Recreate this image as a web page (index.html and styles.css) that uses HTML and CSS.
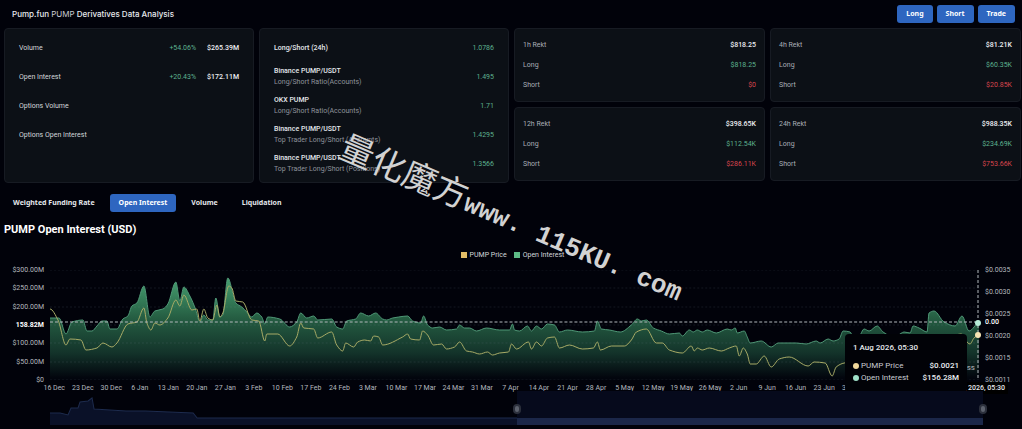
FILE: index.html
```
<!DOCTYPE html>
<html lang="en">
<head>
  <meta charset="UTF-8" />
  <meta name="viewport" content="width=device-width, initial-scale=1.0"/>
  <title>PUMP Derivatives Data Analysis</title>
  <link rel="stylesheet" href="styles.css">
</head>
<body>

  <!-- Header -->
  <header class="header">
    <h1>Pump.fun <span>PUMP</span> Derivatives Data Analysis</h1>
    <div class="actions">
      <button class="btn">Long</button>
      <button class="btn">Short</button>
      <button class="btn">Trade</button>
    </div>
  </header>

  <!-- Stat cards -->
  <section class="cards">
    <div class="card tall">
      <div class="row"><span>Volume</span><span class="up">+54.06%</span><b>$265.39M</b></div>
      <div class="row"><span>Open Interest</span><span class="up">+20.43%</span><b>$172.11M</b></div>
      <div class="row"><span>Options Volume</span></div>
      <div class="row"><span>Options Open Interest</span></div>
    </div>

    <div class="card tall">
      <div class="row"><strong>Long/Short (24h)</strong><span class="up">1.0786</span></div>
      <div class="row"><div><strong>Binance PUMP/USDT</strong><small>Long/Short Ratio(Accounts)</small></div><span class="up">1.495</span></div>
      <div class="row"><div><strong>OKX PUMP</strong><small>Long/Short Ratio(Accounts)</small></div><span class="up">1.71</span></div>
      <div class="row"><div><strong>Binance PUMP/USDT</strong><small>Top Trader Long/Short (Accounts)</small></div><span class="up">1.4295</span></div>
      <div class="row"><div><strong>Binance PUMP/USDT</strong><small>Top Trader Long/Short (Positions)</small></div><span class="up">1.3566</span></div>
    </div>

    <div class="rekt">
      <div class="card small">
        <div class="line"><span>1h Rekt</span><b>$818.25</b></div>
        <div class="line"><span>Long</span><span class="up">$818.25</span></div>
        <div class="line"><span>Short</span><span class="down">$0</span></div>
      </div>
      <div class="card small">
        <div class="line"><span>4h Rekt</span><b>$81.21K</b></div>
        <div class="line"><span>Long</span><span class="up">$60.35K</span></div>
        <div class="line"><span>Short</span><span class="down">$20.85K</span></div>
      </div>
      <div class="card small">
        <div class="line"><span>12h Rekt</span><b>$398.65K</b></div>
        <div class="line"><span>Long</span><span class="up">$112.54K</span></div>
        <div class="line"><span>Short</span><span class="down">$286.11K</span></div>
      </div>
      <div class="card small">
        <div class="line"><span>24h Rekt</span><b>$988.35K</b></div>
        <div class="line"><span>Long</span><span class="up">$234.69K</span></div>
        <div class="line"><span>Short</span><span class="down">$753.66K</span></div>
      </div>
    </div>
  </section>

  <!-- Tabs -->
  <nav class="tabs">
    <button class="tab">Weighted Funding Rate</button>
    <button class="tab active">Open Interest</button>
    <button class="tab">Volume</button>
    <button class="tab">Liquidation</button>
  </nav>

  <h2>PUMP Open Interest (USD)</h2>

  <!-- Chart -->
  <div class="legend">
    <span><i class="box yellow"></i>PUMP Price</span>
    <span><i class="box green"></i>Open Interest</span>
  </div>

  <section class="chart">
    <div class="axis left">
      <span>$300.00M</span><span>$250.00M</span><span>$200.00M</span><span class="mark">158.82M</span><span>$100.00M</span><span>$50.00M</span><span>$0</span>
    </div>

    <div class="plot">
      <svg viewBox="0 0 930 110" preserveAspectRatio="none">
        <defs>
          <linearGradient id="fill" gradientUnits="userSpaceOnUse" x1="0" y1="8" x2="0" y2="108">
            <stop offset="0" stop-color="#46a070"/>
            <stop offset="0.4" stop-color="#255d42"/>
            <stop offset="0.75" stop-color="#13332a"/>
            <stop offset="1" stop-color="#02050d"/>
          </linearGradient>
        </defs>
        <path id="area" fill="url(#fill)"/>
        <path class="grid" d="M0 0H930M0 18H930M0 37H930M0 55H930M0 73H930M0 92H930M0 110H930"/>
        <path id="oi" class="oi-line"/>
        <path id="price" class="price-line"/>
        <path class="cross" d="M0 52H930M929 0V110"/>
      </svg>
      <span class="brand">ss</span>
      <i class="dot oi-dot"></i>
      <i class="dot price-dot"></i>
      <span class="zero">0.00</span>
      <span class="date-tag">1 Aug 2026, 05:30</span>
      <div class="tooltip">
        <p>1 Aug 2026, 05:30</p>
        <div><i class="bullet cream"></i><span>PUMP Price</span><b>$0.0021</b></div>
        <div><i class="bullet mint"></i><span>Open Interest</span><b>$156.28M</b></div>
      </div>
    </div>

    <div class="axis right">
      <span>$0.0035</span><span>$0.0030</span><span>$0.0025</span><span>$0.0020</span><span>$0.0015</span><span>$0.0011</span>
    </div>
  </section>

  <div class="dates">
    <span>16 Dec</span><span>23 Dec</span><span>30 Dec</span><span>6 Jan</span><span>13 Jan</span><span>20 Jan</span><span>27 Jan</span>
    <span>3 Feb</span><span>10 Feb</span><span>17 Feb</span><span>24 Feb</span><span>3 Mar</span><span>10 Mar</span><span>17 Mar</span>
    <span>24 Mar</span><span>31 Mar</span><span>7 Apr</span><span>14 Apr</span><span>21 Apr</span><span>28 Apr</span><span>5 May</span>
    <span>12 May</span><span>19 May</span><span>26 May</span><span>2 Jun</span><span>9 Jun</span><span>16 Jun</span><span>23 Jun</span><span>30 Jun</span>
  </div>

  <!-- Range slider -->
  <div class="brush">
    <svg viewBox="0 0 932 34" preserveAspectRatio="none">
      <path class="brush-area" d="M0 22L10 22L18 24L21 17L28 17L30 11L38 10L42 7L44 18L76 20L95 20L143 22L147 27H932V34H0Z"/>
      <path class="brush-line" d="M0 22L10 22L18 24L21 17L28 17L30 11L38 10L42 7L44 18L76 20L95 20L143 22L147 27H932"/>
    </svg>
    <div class="selection">
      <i class="handle start"></i>
      <i class="handle end"></i>
    </div>
  </div>

  <div class="watermark"><span>量化魔方</span>www. 115KU. com</div>

  <script src="script.js"></script>
</body>
</html>
```
FILE: styles.css
```
/* Reset */
* {
  margin: 0;
  padding: 0;
  box-sizing: border-box;
}

body {
  font-family: Roboto, "Noto Sans", sans-serif;
  font-size: 7px;
  line-height: 10px;
  background-color: #01020a;
  color: #d3d6da;
  padding: 0 1px 0 4px;
  overflow: hidden;
}

button {
  font-family: "Noto Sans", sans-serif;
  font-size: 7px;
  line-height: 10px;
  font-weight: bold;
  color: #e4e7ec;
  border: none;
  border-radius: 3px;
  background: none;
  cursor: pointer;
}

/* Header */
.header {
  display: flex;
  align-items: center;
  justify-content: space-between;
  height: 28px;
  padding: 0 6px 0 8px;
}

h1 {
  font-family: Inter, sans-serif;
  font-size: 8px;
  font-weight: 500;
  color: #e8eaee;
}

h1 span {
  font-weight: 400;
  color: #c9ccd2;
}

.actions {
  display: flex;
  gap: 4px;
}

.btn {
  padding: 4px 9px;
  background-color: #2e66c0;
  color: white;
}

/* Cards */
.cards {
  display: grid;
  grid-template-columns: 250fr 250fr 507fr;
  gap: 5px;
}

.card {
  background-color: #0c1016;
  border: 1px solid #171b23;
  border-radius: 4px;
}

.tall {
  height: 155px;
  padding: 4px 14px;
}

.row {
  display: flex;
  align-items: center;
  height: 29px;
}

.row > :first-child {
  flex: 1;
}

.row b {
  margin-left: 11px;
}

strong {
  display: block;
  font-weight: 500;
  color: #e4e7ec;
}

small {
  display: block;
  font-size: 7px;
  line-height: 12px;
  color: #8e939b;
}

b {
  font-weight: 500;
  color: #eceef2;
}

.up {
  color: #5cb08f;
}

.down {
  color: #d6454d;
}

.rekt {
  display: grid;
  grid-template-columns: 1fr 1fr;
  gap: 5px;
  align-content: start;
}

.small {
  height: 74px;
  padding: 6px 8px;
  color: #a9adb5;
}

.line {
  display: flex;
  justify-content: space-between;
  align-items: center;
  height: 20px;
}

/* Tabs */
.tabs {
  display: flex;
  gap: 6px;
  margin-top: 11px;
}

.tab {
  padding: 4px 9px;
}

.tab.active {
  background-color: #2e66c0;
  color: white;
}

h2 {
  margin-top: 10px;
  font-size: 11px;
  line-height: 16px;
  font-weight: 700;
  color: white;
}

/* Chart */
.legend {
  display: flex;
  justify-content: center;
  gap: 7px;
  margin-top: 12px;
  color: #d3d6da;
}

.legend span {
  display: flex;
  align-items: center;
  gap: 3px;
}

.box {
  width: 6px;
  height: 6px;
}

.yellow { background-color: #e2bd67; }
.green { background-color: #5dbb86; }

.chart {
  display: grid;
  grid-template-columns: 40px 1fr 36px;
  gap: 6px;
  height: 120px;
  margin-top: 5px;
  color: #b4b8bf;
}

.axis {
  display: flex;
  flex-direction: column;
  justify-content: space-between;
}

.left {
  text-align: right;
}

.mark {
  font-weight: bold;
  color: white;
}

.plot {
  position: relative;
  margin: 5px 0;
}

.plot svg,
.brush svg {
  display: block;
  width: 100%;
  height: 100%;
  fill: none;
}

.grid {
  stroke: #8290a0;
  stroke-opacity: 0.16;
  stroke-dasharray: 2 2;
}

.oi-line {
  stroke: #4f9876;
}

.price-line {
  stroke: #a8ab66;
}

.cross {
  stroke: #b4b9bd;
  stroke-dasharray: 3 2;
}

.dot {
  position: absolute;
  right: -2px;
  width: 6px;
  height: 6px;
  border-radius: 50%;
}

.oi-dot {
  top: 50px;
  background-color: #b5ead6;
}

.price-dot {
  top: 62px;
  background-color: #f5e3b2;
}

.zero {
  position: absolute;
  top: 47px;
  right: -22px;
  padding: 0 2px;
  background-color: #01020a;
  color: white;
  font-weight: 500;
}

.brand {
  position: absolute;
  right: 4px;
  bottom: 7px;
  font-size: 8px;
}

.date-tag {
  position: absolute;
  right: -29px;
  top: 112px;
  padding: 1px 3px;
  background-color: #000;
  color: #e8eaee;
  font-weight: 500;
  white-space: nowrap;
}

.tooltip {
  position: absolute;
  right: 12px;
  top: 64px;
  width: 122px;
  padding: 8px;
  border-radius: 4px;
  background-color: #010207;
  color: #c9ccd2;
  font-size: 8px;
  line-height: 12px;
}

.tooltip p {
  margin-bottom: 6px;
  color: #e8eaee;
  font-weight: 500;
}

.tooltip div {
  display: flex;
  align-items: center;
}

.tooltip b {
  margin-left: auto;
}

.bullet {
  width: 6px;
  height: 6px;
  margin-right: 2px;
  border-radius: 50%;
}

.cream { background-color: #f0d79b; }
.mint { background-color: #9fe0c8; }

.dates {
  display: grid;
  grid-template-columns: repeat(33, 1fr);
  margin: -2px 40px 0 36px;
  text-align: center;
  white-space: nowrap;
  color: #b4b8bf;
}

/* Range slider */
.brush {
  position: relative;
  height: 34px;
  margin: -2px 38px 0 46px;
}

.brush-area {
  fill: #0a1128;
}

.brush-line {
  stroke: #1d2b4d;
}

.selection {
  position: absolute;
  top: 0;
  bottom: 0;
  left: 50%;
  right: 0;
  background: linear-gradient(#060a1c 27px, #1b2749 27px);
}

.handle {
  position: absolute;
  top: 13px;
  width: 8px;
  height: 10px;
  border: 2px solid #2c303c;
  border-radius: 4px;
  background-color: #5d626e;
}

.start { left: -4px; }
.end { right: -4px; }

/* Watermark over the whole page */
.watermark {
  position: absolute;
  left: 341px;
  top: 127px;
  font-family: "Liberation Mono", monospace;
  font-size: 26px;
  line-height: 32px;
  font-weight: bold;
  color: #d2d2d2;
  white-space: nowrap;
  transform: rotate(23deg);
  transform-origin: 0 50%;
  pointer-events: none;
}

.watermark span {
  font-family: "Noto Sans CJK SC", sans-serif;
  font-size: 34px;
  font-weight: normal;
}
```
FILE: script.js
```
// [x, y] points inside the 930x110 plot
const openInterest = [
  [0,48],[9,48],[16,64],[22,52],[33,50],[37,61],[42,61],[47,56],[52,51],[57,51],[60,59],[67,59],[73,49],[78,46],[82,36],[87,33],
  [94,16],[100,47],[105,41],[113,39],[118,34],[126,12],[130,31],[134,17],[140,26],[146,40],[150,52],[154,45],[158,50],[163,50],
  [166,28],[170,47],[173,45],[178,8],[186,33],[192,37],[197,42],[202,47],[207,43],[212,47],[215,54],[218,47],[230,49],[240,57],
  [247,52],[251,43],[257,48],[264,46],[268,50],[282,49],[287,57],[293,59],[297,51],[306,49],[311,43],[319,46],[326,43],[333,49],
  [337,50],[343,48],[349,47],[358,46],[363,51],[371,53],[374,46],[378,55],[383,58],[390,57],[397,60],[407,59],[410,55],[415,58],
  [420,58],[427,61],[437,58],[450,60],[460,60],[463,54],[465,60],[470,61],[478,56],[482,61],[487,56],[492,59],[498,54],[505,55],
  [510,62],[518,60],[533,62],[545,61],[548,51],[552,59],[560,60],[571,62],[582,55],[588,49],[592,51],[597,50],[604,58],[612,61],
  [620,64],[630,63],[633,66],[640,60],[644,62],[648,60],[653,62],[658,60],[667,63],[678,59],[682,60],[686,58],[688,63],[695,61],
  [698,67],[701,73],[712,71],[722,77],[729,73],[747,73],[757,74],[767,71],[771,73],[779,69],[784,71],[790,69],[794,61],[801,62],
  [804,67],[810,66],[815,59],[820,61],[828,56],[834,62],[842,66],[849,65],[855,62],[861,63],[864,56],[870,58],[878,62],[880,43],
  [885,41],[895,52],[906,56],[913,46],[920,61],[930,53]
];

const pumpPrice = [
  [0,39],[8,50],[16,75],[20,69],[31,70],[36,80],[47,78],[53,73],[62,77],[67,73],[78,54],[87,52],[94,38],[97,53],[101,60],[105,53],
  [110,55],[118,48],[126,30],[130,36],[134,25],[142,40],[147,39],[150,51],[154,39],[158,48],[163,50],[167,35],[170,47],[173,43],
  [179,16],[182,18],[186,31],[193,32],[202,50],[209,51],[215,71],[217,64],[228,64],[240,76],[247,67],[251,53],[254,58],[264,59],
  [268,68],[282,62],[287,75],[293,81],[296,73],[304,77],[308,72],[315,70],[321,71],[324,66],[329,67],[333,75],[353,67],[358,64],
  [361,69],[370,70],[373,61],[378,65],[384,75],[392,74],[397,79],[405,77],[410,72],[417,81],[423,82],[430,84],[438,82],[443,85],
  [450,83],[459,82],[462,74],[467,79],[479,72],[482,79],[487,72],[492,76],[498,68],[505,67],[510,78],[520,75],[533,79],[544,78],
  [548,72],[551,80],[562,76],[575,76],[582,70],[587,62],[597,59],[607,73],[613,73],[620,80],[633,83],[642,76],[645,81],[648,78],
  [653,80],[660,78],[672,81],[680,78],[687,76],[690,86],[694,78],[698,84],[701,94],[707,94],[715,86],[722,97],[730,89],[740,87],
  [759,96],[765,92],[776,93],[783,106],[787,97],[795,93],[830,88],[870,84],[912,64],[919,73],[921,74],[925,68],[930,65]
];

// smooth line that never overshoots its points
function smooth(points) {
  const slope = points.map((p, i) => {
    const a = points[i - 1], b = points[i + 1];
    if (!a || !b) return 0;
    const m1 = (p[1] - a[1]) / (p[0] - a[0]);
    const m2 = (b[1] - p[1]) / (b[0] - p[0]);
    return m1 * m2 <= 0 ? 0 : 2 * m1 * m2 / (m1 + m2);
  });
  let d = 'M' + points[0];
  for (let i = 1; i < points.length; i++) {
    const [x0, y0] = points[i - 1], [x1, y1] = points[i];
    const h = (x1 - x0) / 3;
    d += `C${x0 + h} ${y0 + slope[i - 1] * h} ${x1 - h} ${y1 - slope[i] * h} ${x1} ${y1}`;
  }
  return d;
}

const line = smooth(openInterest);
document.getElementById('oi').setAttribute('d', line);
document.getElementById('area').setAttribute('d', line + 'V110H0Z');
document.getElementById('price').setAttribute('d', smooth(pumpPrice));
```
